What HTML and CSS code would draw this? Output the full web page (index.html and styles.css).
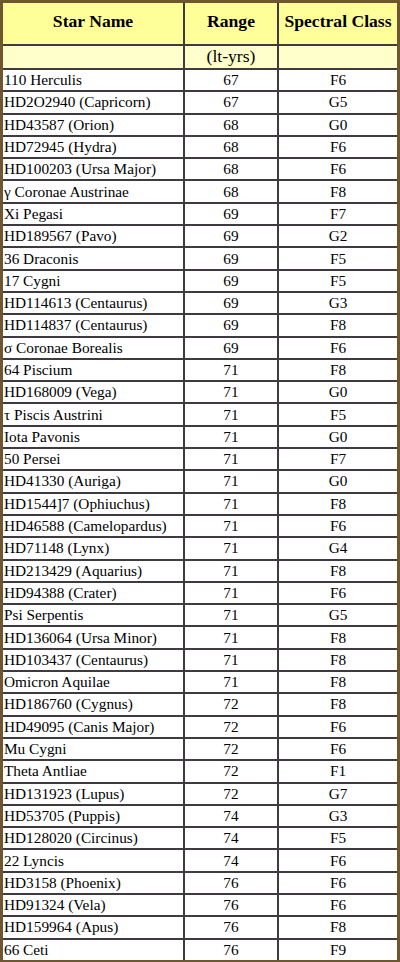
FILE: index.html
```html
<!DOCTYPE html>
<html lang="en">
<head>
<meta charset="utf-8">
<title>Nearby Sun-like Stars</title>
<link rel="stylesheet" href="styles.css">
</head>
<body>
<table class="stars">
  <colgroup>
    <col class="c-name">
    <col class="c-range">
    <col class="c-class">
  </colgroup>
  <thead>
    <tr class="head">
      <th>Star Name</th>
      <th>Range</th>
      <th class="last">Spectral Class</th>
    </tr>
    <tr class="units">
      <td></td>
      <td>(lt-yrs)</td>
      <td class="last"></td>
    </tr>
  </thead>
  <tbody>
    <tr><td>110 Herculis</td><td>67</td><td>F6</td></tr>
    <tr><td>HD2O2940 (Capricorn)</td><td>67</td><td>G5</td></tr>
    <tr><td>HD43587 (Orion)</td><td>68</td><td>G0</td></tr>
    <tr><td>HD72945 (Hydra)</td><td>68</td><td>F6</td></tr>
    <tr><td>HD100203 (Ursa Major)</td><td>68</td><td>F6</td></tr>
    <tr><td>γ Coronae Austrinae</td><td>68</td><td>F8</td></tr>
    <tr><td>Xi Pegasi</td><td>69</td><td>F7</td></tr>
    <tr><td>HD189567 (Pavo)</td><td>69</td><td>G2</td></tr>
    <tr><td>36 Draconis</td><td>69</td><td>F5</td></tr>
    <tr><td>17 Cygni</td><td>69</td><td>F5</td></tr>
    <tr><td>HD114613 (Centaurus)</td><td>69</td><td>G3</td></tr>
    <tr><td>HD114837 (Centaurus)</td><td>69</td><td>F8</td></tr>
    <tr><td>σ Coronae Borealis</td><td>69</td><td>F6</td></tr>
    <tr><td>64 Piscium</td><td>71</td><td>F8</td></tr>
    <tr><td>HD168009 (Vega)</td><td>71</td><td>G0</td></tr>
    <tr><td>τ Piscis Austrini</td><td>71</td><td>F5</td></tr>
    <tr><td>Iota Pavonis</td><td>71</td><td>G0</td></tr>
    <tr><td>50 Persei</td><td>71</td><td>F7</td></tr>
    <tr><td>HD41330 (Auriga)</td><td>71</td><td>G0</td></tr>
    <tr><td>HD1544]7 (Ophiuchus)</td><td>71</td><td>F8</td></tr>
    <tr><td>HD46588 (Camelopardus)</td><td>71</td><td>F6</td></tr>
    <tr><td>HD71148 (Lynx)</td><td>71</td><td>G4</td></tr>
    <tr><td>HD213429 (Aquarius)</td><td>71</td><td>F8</td></tr>
    <tr><td>HD94388 (Crater)</td><td>71</td><td>F6</td></tr>
    <tr><td>Psi Serpentis</td><td>71</td><td>G5</td></tr>
    <tr><td>HD136064 (Ursa Minor)</td><td>71</td><td>F8</td></tr>
    <tr><td>HD103437 (Centaurus)</td><td>71</td><td>F8</td></tr>
    <tr><td>Omicron Aquilae</td><td>71</td><td>F8</td></tr>
    <tr><td>HD186760 (Cygnus)</td><td>72</td><td>F8</td></tr>
    <tr><td>HD49095 (Canis Major)</td><td>72</td><td>F6</td></tr>
    <tr><td>Mu Cygni</td><td>72</td><td>F6</td></tr>
    <tr><td>Theta Antliae</td><td>72</td><td>F1</td></tr>
    <tr><td>HD131923 (Lupus)</td><td>72</td><td>G7</td></tr>
    <tr><td>HD53705 (Puppis)</td><td>74</td><td>G3</td></tr>
    <tr><td>HD128020 (Circinus)</td><td>74</td><td>F5</td></tr>
    <tr><td>22 Lyncis</td><td>74</td><td>F6</td></tr>
    <tr><td>HD3158 (Phoenix)</td><td>76</td><td>F6</td></tr>
    <tr><td>HD91324 (Vela)</td><td>76</td><td>F6</td></tr>
    <tr><td>HD159964 (Apus)</td><td>76</td><td>F8</td></tr>
    <tr><td>66 Ceti</td><td>76</td><td>F9</td></tr>
  </tbody>
</table>
</body>
</html>
```
FILE: styles.css
```css
html, body {
  margin: 0;
  padding: 0;
  background: #ffffff;
}

.stars {
  width: 400px;
  table-layout: fixed;
  border-collapse: separate;
  border-spacing: 0;
  border: 3px solid #6e5630;
  font-family: "Liberation Serif", "Times New Roman", serif;
  color: #000000;
  background: #ffffff;
}

.c-name { width: 182px; }
.c-range { width: 94px; }
.c-class { width: 118px; }

.stars th,
.stars td {
  padding: 0;
  border-right: 2px solid #3e3a40;
  border-bottom: 2px solid #3e3a40;
  vertical-align: middle;
  white-space: nowrap;
  overflow: hidden;
}

.stars th.last,
.stars td.last,
.stars td:last-child {
  border-right: 0;
}

.head {
  height: 43px;
  background: #ffff99;
}

.head th {
  font-size: 17.6px;
  font-weight: bold;
  text-align: center;
  padding-bottom: 4px;
}

.units {
  height: 23px;
  background: #ffffcc;
}

.units td {
  font-size: 17.6px;
  text-align: center;
  padding-bottom: 1px;
}

.stars tbody tr {
  height: 22.3px;
}

.stars tbody td {
  font-size: 15.3px;
  text-align: center;
}

.stars tbody td:first-child {
  text-align: left;
  padding-left: 1px;
}

.stars tbody tr:last-child {
  height: 20.3px;
}

.stars tbody tr:last-child td {
  border-bottom: 0;
}
```
